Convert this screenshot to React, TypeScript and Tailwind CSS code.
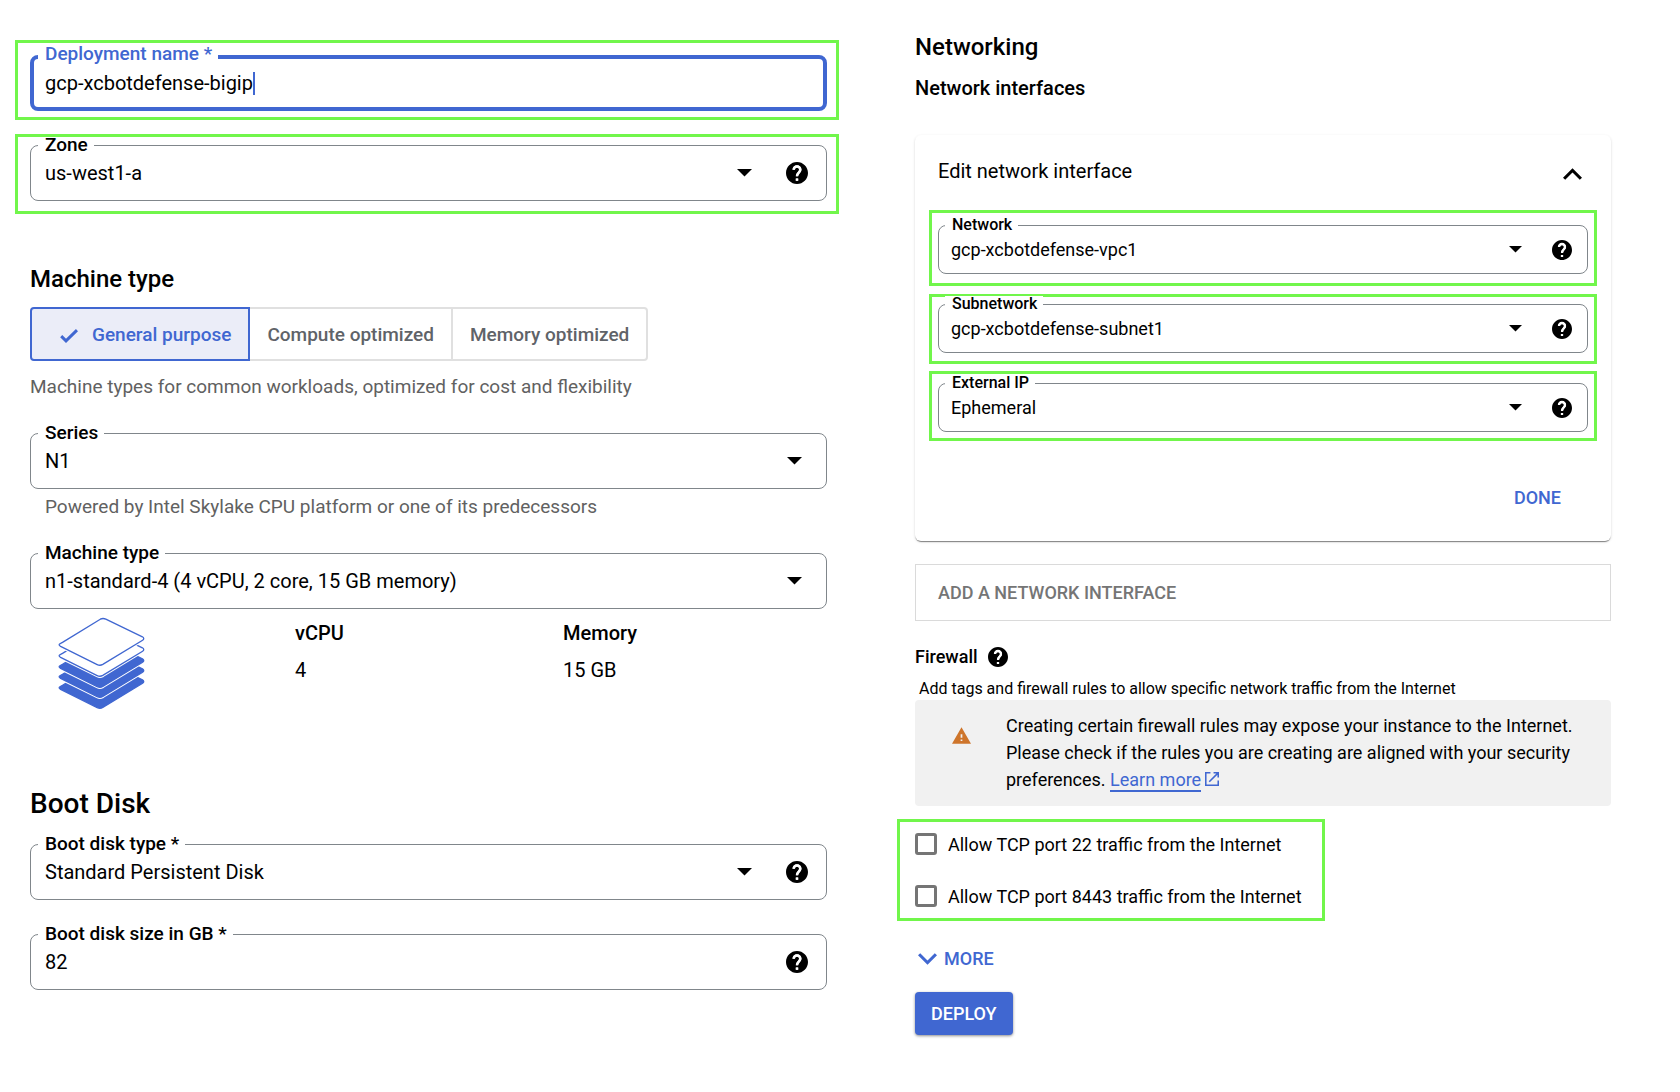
import { useId, type ReactNode } from "react";

function HelpIcon({ className }: { className: string }) {
  return (
    <svg viewBox="2 2 20 20" fill="currentColor" className={className} aria-hidden="true">
      <path d="M12 2C6.48 2 2 6.48 2 12s4.48 10 10 10 10-4.48 10-10S17.52 2 12 2zm1 17h-2v-2h2v2zm2.07-7.75l-.9.92C13.45 12.9 13 13.5 13 15h-2v-.5c0-1.1.45-2.1 1.17-2.83l1.24-1.26c.37-.36.59-.86.59-1.41 0-1.1-.9-2-2-2s-2 .9-2 2H8c0-2.21 1.79-4 4-4s4 1.79 4 4c0 .88-.36 1.68-.93 2.25z" />
      <path
        d="M9 9c0-1.66 1.34-3 3-3s3 1.34 3 3c0 2.4-3 2.9-3 6M12 17v2"
        fill="none"
        stroke="#ffffff"
        strokeWidth="2.3"
      />
    </svg>
  );
}

function Caret({ className }: { className: string }) {
  return (
    <svg viewBox="0 0 10 5" fill="currentColor" className={className} aria-hidden="true">
      <path d="M0 0l5 5 5-5z" />
    </svg>
  );
}

function Highlight({ className, children }: { className: string; children: ReactNode }) {
  return <div className={`border-3 border-[#71f64b] ${className}`}>{children}</div>;
}

type FieldProps = {
  label: string;
  value: string;
  kind: "select" | "number" | "active";
  help?: boolean;
  compact?: boolean;
};

function Field({ label, value, kind, help, compact }: FieldProps) {
  const id = useId();
  const active = kind === "active";
  const valueText = compact ? "text-[18px]" : "text-[20px]";
  const frame = active
    ? "h-[56px] border-4 border-[#4067d1] pr-[18px] pl-[11px]"
    : compact
      ? "h-[49px] border border-[#80868b] pr-[15px] pl-[12px]"
      : "h-[56px] border border-[#80868b] pr-[18px] pl-[14px]";
  const labelPlace = active
    ? "-top-[13px] left-[4px] text-[19px] text-[#4067d1]"
    : compact
      ? "-top-[9px] left-[6px] text-[16px]"
      : "-top-[9px] left-[7px] text-[19px]";
  return (
    <div className={`relative flex items-center rounded-lg ${frame}`}>
      <label
        htmlFor={id}
        className={`absolute bg-white pr-[6px] pl-[7px] leading-[16px] font-medium whitespace-nowrap ${labelPlace}`}
      >
        {label}
      </label>
      {kind === "select" ? (
        <div className="relative flex h-full flex-1 items-center">
          <select id={id} defaultValue={value} className={`h-full w-full appearance-none bg-transparent outline-none ${valueText}`}>
            <option>{value}</option>
          </select>
          <Caret
            className={`pointer-events-none absolute ${compact ? "right-0 w-[13px]" : help ? "right-0 w-[15px]" : "right-[6px] w-[15px]"}`}
          />
        </div>
      ) : (
        <input
          id={id}
          type="text"
          defaultValue={value}
          className={`h-full bg-transparent outline-none ${valueText} ${active ? "field-sizing-content caret-transparent" : "min-w-0 flex-1"}`}
        />
      )}
      {active && <span className="h-[23px] w-[2px] bg-[#4067d1]" />}
      {help && (
        <button type="button" aria-label={`Help for ${label}`} className={compact ? "ml-[30px]" : "ml-[34px]"}>
          <HelpIcon className={compact ? "size-[20px]" : "size-[22px]"} />
        </button>
      )}
    </div>
  );
}

const SHEET =
  "M4.5 25.4L42.3 2.2Q45 .8 47.8 2.2L84.4 19.8Q87 21.4 84.6 23.2L44.8 47.4Q42 49 39.2 47.6L2.6 29.4Q-.4 27.8 2.6 26.4Z";

const SHEETS = [
  { y: 43, fill: "#4067d1" },
  { y: 32, fill: "#4067d1" },
  { y: 22, fill: "#4067d1" },
  { y: 11, fill: "#ffffff" },
  { y: 0, fill: "#ffffff" },
];

function StackIcon() {
  return (
    <svg viewBox="0 0 87 93" className="h-[93px] w-[87px]" aria-hidden="true">
      {SHEETS.map(({ y, fill }) => (
        <g key={y} transform={`translate(0 ${y})`}>
          <path d={SHEET} fill="#ffffff" stroke="#ffffff" strokeWidth="3.4" />
          <path d={SHEET} fill={fill} stroke="#4067d1" strokeWidth="1.3" />
        </g>
      ))}
    </svg>
  );
}

function FirewallOption({ children }: { children: ReactNode }) {
  return (
    <label className="flex h-[22px] items-center gap-[11px] text-[18px]">
      <input type="checkbox" className="size-[22px] appearance-none rounded-[3px] border-3 border-[#757575]" />
      {children}
    </label>
  );
}

export default function App() {
  return (
    <main className="grid grid-cols-[824fr_696fr] gap-x-[76px] bg-white pr-[69px] pl-[15px] font-['Roboto',sans-serif] text-black">
      <section className="pt-[40px] pb-[100px]">
        <Highlight className="pt-[12px] pr-[9px] pb-[6px] pl-[12px]">
          <Field label="Deployment name *" value="gcp-xcbotdefense-bigip" kind="active" />
        </Highlight>
        <Highlight className="mt-[14px] pt-[8px] pr-[9px] pb-[10px] pl-[12px]">
          <Field label="Zone" value="us-west1-a" kind="select" help />
        </Highlight>

        <div className="pr-[12px] pl-[15px]">
          <h2 className="mt-[51px] text-[24px] leading-[28px] font-medium">Machine type</h2>
          <div className="mt-[14px] flex h-[54px] text-[19px] font-medium text-[#5f6368]">
            <button
              type="button"
              aria-pressed="true"
              className="flex items-center rounded-l-[4px] border-2 border-[#4067d1] bg-[#ebedf8] pt-[2px] pr-[17px] pl-[28px] text-[#4067d1]"
            >
              <svg
                viewBox="0 0 18 14"
                fill="none"
                stroke="currentColor"
                strokeWidth="3"
                className="mt-[2px] mr-[14px] h-[14px] w-[18px]"
                aria-hidden="true"
              >
                <path d="M1.2 7.2L6 11.8L17 1.2" />
              </svg>
              General purpose
            </button>
            <button type="button" className="border-y-2 border-[#e0e0e0] px-[17px] pt-[2px]">
              Compute optimized
            </button>
            <button type="button" className="rounded-r-[4px] border-2 border-[#e0e0e0] px-[17px] pt-[2px]">
              Memory optimized
            </button>
          </div>
          <p className="mt-[14px] text-[19px] leading-[24px] text-[#616161]">
            Machine types for common workloads, optimized for cost and flexibility
          </p>
          <div className="mt-[34px]">
            <Field label="Series" value="N1" kind="select" />
          </div>
          <p className="mt-[6px] pl-[15px] text-[19px] leading-[24px] text-[#616161]">
            Powered by Intel Skylake CPU platform or one of its predecessors
          </p>
          <div className="mt-[34px]">
            <Field label="Machine type" value="n1-standard-4 (4 vCPU, 2 core, 15 GB memory)" kind="select" />
          </div>
          <div className="mt-[8px] flex pl-[28px] text-[20px] leading-[24px]">
            <StackIcon />
            <dl className="mt-[4px] ml-[150px] w-[268px]">
              <dt className="font-medium">vCPU</dt>
              <dd className="mt-[13px]">4</dd>
            </dl>
            <dl className="mt-[4px]">
              <dt className="font-medium">Memory</dt>
              <dd className="mt-[13px]">15 GB</dd>
            </dl>
          </div>

          <h1 className="mt-[78px] text-[28px] leading-[32px] font-medium">Boot Disk</h1>
          <div className="mt-[24px] flex flex-col gap-[34px]">
            <Field label="Boot disk type *" value="Standard Persistent Disk" kind="select" help />
            <Field label="Boot disk size in GB *" value="82" kind="number" help />
          </div>
        </div>
      </section>

      <section className="pt-[33px]">
        <h2 className="text-[24px] leading-[28px] font-medium">Networking</h2>
        <h3 className="mt-[15px] text-[20px] leading-[24px] font-medium">Network interfaces</h3>

        <div className="mt-[35px] rounded-[6px] px-[14px] pb-[31px] shadow-[0_2px_1px_-1px_rgba(0,0,0,0.35),0_1px_1px_rgba(0,0,0,0.14),0_1px_3px_rgba(0,0,0,0.12)]">
          <div className="flex items-center justify-between pt-[24px] pr-[15px] pl-[9px]">
            <h4 className="text-[20px] leading-[24px]">Edit network interface</h4>
            <button type="button" aria-label="Collapse" className="pt-[5px]">
              <svg viewBox="6 8 12 7.41" fill="currentColor" className="h-[12px] w-[19px]" aria-hidden="true">
                <path d="M12 8l-6 6 1.41 1.41L12 10.83l4.59 4.58L18 14z" />
              </svg>
            </button>
          </div>
          <Highlight className="mt-[27px] px-[6px] pt-[12px] pb-[9px]">
            <Field label="Network" value="gcp-xcbotdefense-vpc1" kind="select" help compact />
          </Highlight>
          <Highlight className="mt-[8px] px-[6px] pt-[7px] pb-[8px]">
            <Field label="Subnetwork" value="gcp-xcbotdefense-subnet1" kind="select" help compact />
          </Highlight>
          <Highlight className="mt-[7px] px-[6px] pt-[9px] pb-[6px]">
            <Field label="External IP" value="Ephemeral" kind="select" help compact />
          </Highlight>
          <div className="mt-[45px] flex justify-end pr-[36px]">
            <button type="button" className="text-[18px] leading-[24px] font-medium text-[#4067d1]">
              DONE
            </button>
          </div>
        </div>

        <button
          type="button"
          className="mt-[23px] h-[57px] w-full border border-[#dadada] pl-[22px] text-left text-[18px] font-medium text-[#757575]"
        >
          ADD A NETWORK INTERFACE
        </button>

        <div className="mt-[24px] flex items-center gap-[10px]">
          <h4 className="text-[18px] leading-[24px] font-medium">Firewall</h4>
          <button type="button" aria-label="Help for Firewall">
            <HelpIcon className="size-[20px]" />
          </button>
        </div>
        <p className="mt-[9px] pl-[4px] text-[16px] leading-[22px]">
          Add tags and firewall rules to allow specific network traffic from the Internet
        </p>
        <div className="flex rounded-[4px] bg-[#f1f1f1] pt-[12px] pr-[37px] pb-[13px] pl-[37px]">
          <svg viewBox="1 2 22 19" fill="#ce752b" className="mt-[15px] mr-[35px] h-[17px] w-[19px] shrink-0" aria-hidden="true">
            <path d="M1 21h22L12 2 1 21zm12-3h-2v-2h2v2zm0-4h-2v-4h2v4z" />
          </svg>
          <p className="text-[18px] leading-[27px]">
            Creating certain firewall rules may expose your instance to the Internet. Please check if the rules you are
            creating are aligned with your security preferences.{" "}
            <a href="#learn-more" className="border-b-2 border-[#4067d1] text-[#4067d1]">
              Learn more
            </a>
            <svg
              viewBox="3 3 18 18"
              fill="#4067d1"
              className="ml-[4px] inline size-[14px] align-baseline"
              aria-hidden="true"
            >
              <path d="M19 19H5V5h5V3H3v18h18v-7h-2v5zM14 3v2h3.59l-9.83 9.83 1.41 1.41L19 6.41V10h2V3h-7z" />
            </svg>
          </p>
        </div>

        <Highlight className="mt-[13px] -ml-[18px] flex w-fit flex-col gap-[30px] py-[11px] pr-[20px] pl-[15px]">
          <FirewallOption>Allow TCP port 22 traffic from the Internet</FirewallOption>
          <FirewallOption>Allow TCP port 8443 traffic from the Internet</FirewallOption>
        </Highlight>

        <button
          type="button"
          className="mt-[26px] flex items-center gap-[7px] pl-[3px] text-[18px] leading-[24px] font-medium text-[#4067d1]"
        >
          <svg viewBox="6 8.59 12 7.41" fill="currentColor" className="h-[12px] w-[19px]" aria-hidden="true">
            <path d="M16.59 8.59L12 13.17 7.41 8.59 6 10l6 6 6-6z" />
          </svg>
          MORE
        </button>
        <button
          type="button"
          className="mt-[21px] h-[43px] rounded-[4px] bg-[#4067d1] px-[16px] text-[18px] font-medium text-white shadow-[0_1px_3px_rgba(0,0,0,0.45)]"
        >
          DEPLOY
        </button>
      </section>
    </main>
  );
}
